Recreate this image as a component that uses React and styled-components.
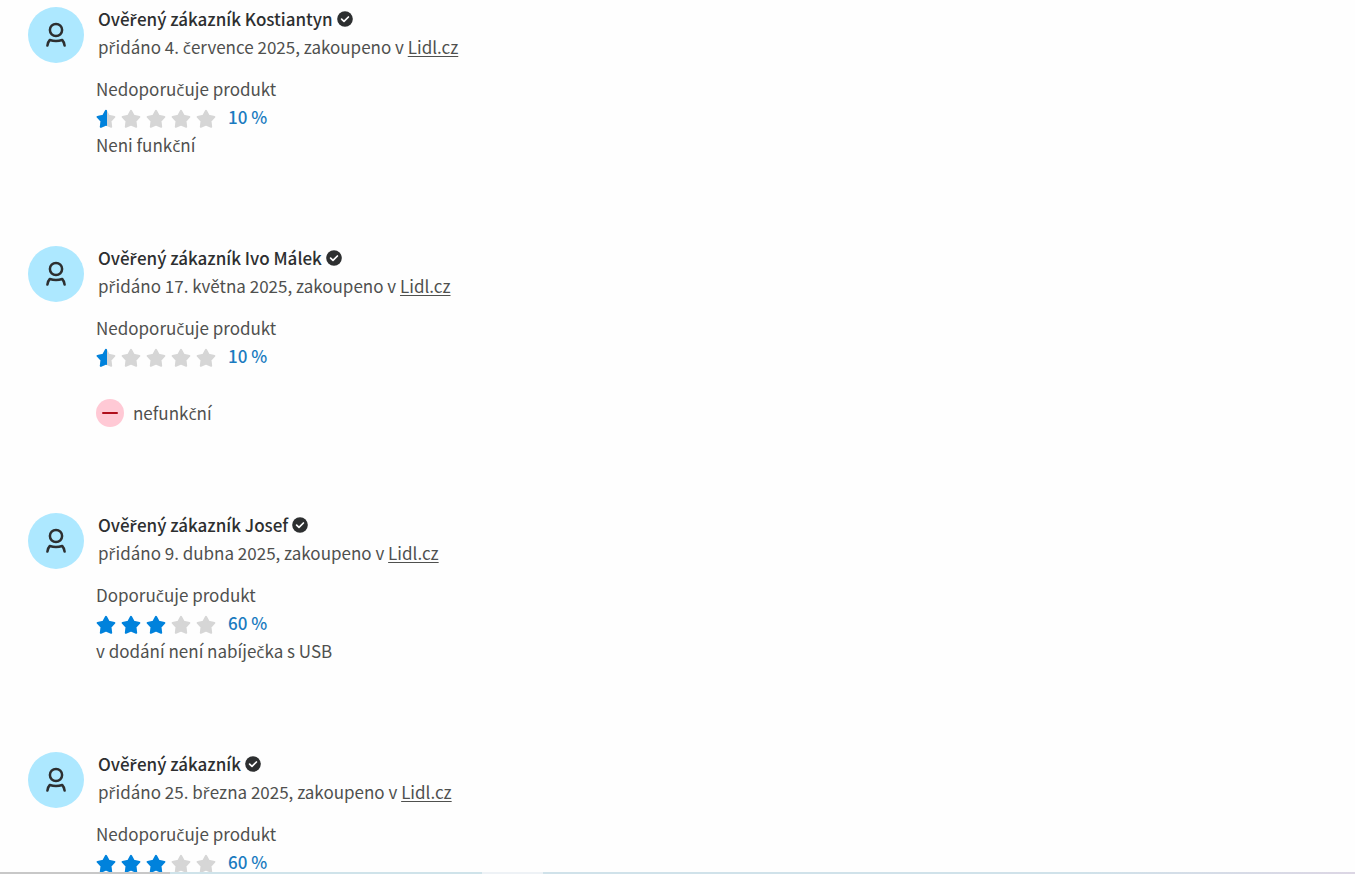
import styled, { createGlobalStyle } from 'styled-components';

const colorText = '#4f504e';
const colorDark = '#2d2f30';
const colorBlue = '#0082dc';
const colorLink = '#1a7bc0';
const colorGrey = '#d6d6d6';

const GlobalStyle = createGlobalStyle`
  * { box-sizing: border-box; }
  body {
    margin: 0;
    background: #fefefe;
    color: ${colorText};
    font-family: "Noto Sans CJK SC", "Open Sans", "Noto Sans", sans-serif;
    font-size: 17px;
    line-height: 28px;
  }
`;

const Page = styled.div`
  height: 100vh;
  display: flex;
  flex-direction: column;
  overflow: hidden;
`;

const Reviews = styled.main`
  flex: 1;
  min-height: 0;
  overflow: hidden;
  padding: 7px 28px 0;
`;

const BottomEdge = styled.footer`
  height: 2px;
  flex-shrink: 0;
  background: linear-gradient(
    to right,
    #c8c8c8 0 170px,
    #cfe3ea 170px 482px,
    #eef2f6 482px 543px,
    #d0e2ea 543px 80%,
    #dcd6e4 100%
  );
`;

const ReviewItem = styled.article`
  margin-bottom: 87px;
`;

const Header = styled.header`
  display: flex;
  gap: 14px;
`;

const Avatar = styled.div`
  width: 56px;
  height: 56px;
  border-radius: 50%;
  background: #ade8ff;
  color: ${colorDark};
  display: flex;
  align-items: center;
  justify-content: center;
`;

const Author = styled.div`
  margin-top: -2px;
`;

// the main family has no č and ř of its own
const Caron = styled.span`
  font-family: "Open Sans", "Noto Sans", sans-serif;
  line-height: 1;
`;

const Name = styled.div`
  display: flex;
  align-items: center;
  gap: 4px;
  color: ${colorDark};
  font-weight: 500;

  ${Caron} { font-weight: 600; }
`;

const ShopLink = styled.a`
  color: inherit;
  text-decoration: underline;
  text-decoration-thickness: 1px;
  text-underline-offset: 2px;
`;

const Body = styled.div`
  padding: 12px 0 0 68px;
`;

const Text = styled.p`
  margin: 0;
`;

const Rating = styled.div`
  display: flex;
  align-items: center;
  height: 28px;
`;

const Stars = styled.div`
  display: flex;
  gap: 5px;
  padding-top: 4px;
  margin-right: 12px;
`;

const Percent = styled.span`
  color: ${colorLink};
  font-weight: 500;
`;

const ConList = styled.ul`
  list-style: none;
  margin: 29px 0 -1px;
  padding: 0;
`;

const Con = styled.li`
  display: flex;
  align-items: center;
  gap: 9px;
`;

const Minus = styled.span`
  width: 28px;
  height: 28px;
  border-radius: 50%;
  background: #ffc9d5;
  display: flex;
  align-items: center;
  justify-content: center;

  &::before {
    content: '';
    width: 16px;
    height: 2px;
    border-radius: 1px;
    background: #b00f1c;
  }
`;

const PersonIcon = () => (
  <svg width="22" height="26" viewBox="0 0 22 26" fill="none" stroke="currentColor" strokeWidth="2.5" strokeLinecap="round" strokeLinejoin="round" aria-hidden="true">
    <circle cx="11" cy="8" r="6.1" />
    <path d="M2.4 23.6 C2.8 21.2 3.5 19.3 4.8 18 C8.8 19.4 13.2 19.4 17.2 18 C18.5 19.3 19.2 21.2 19.6 23.6" />
  </svg>
);

const VerifiedIcon = () => (
  <svg width="16" height="16" viewBox="0 0 16 16" role="img" aria-label="Ověřeno">
    <circle cx="8" cy="8" r="7.8" fill={colorDark} />
    <path d="M4.6 8.1 L7 10.4 L11.4 6" fill="none" stroke="#fff" strokeWidth="1.7" strokeLinecap="round" strokeLinejoin="round" />
  </svg>
);

const starPath = 'M10 1.8 L12.7 6.8 L18.4 7.9 L14.5 12 L15.2 17.8 L10 15.6 L4.8 17.8 L5.5 12 L1.6 7.9 L7.3 6.8 Z';

const Star = ({ fill }) => (
  <svg width="20" height="20" viewBox="0 0 20 20" aria-hidden="true">
    <path d={starPath} fill={fill === 1 ? colorBlue : colorGrey} stroke={fill === 1 ? colorBlue : colorGrey} strokeWidth="2" strokeLinejoin="round" />
    {fill === 0.5 && (
      <svg width="11" height="20" viewBox="0 0 11 20">
        <path d={starPath} fill={colorBlue} stroke={colorBlue} strokeWidth="2" strokeLinejoin="round" />
      </svg>
    )}
  </svg>
);

const Czech = ({ children }) => (
  <span>
    {children.split(/([čř])/).map((part, i) => (i % 2 ? <Caron key={i}>{part}</Caron> : part))}
  </span>
);

const reviews = [
  { name: 'Ověřený zákazník Kostiantyn', date: '4. července 2025', verdict: 'Nedoporučuje produkt', percent: 10, text: 'Neni funkční' },
  { name: 'Ověřený zákazník Ivo Málek', date: '17. května 2025', verdict: 'Nedoporučuje produkt', percent: 10, cons: ['nefunkční'] },
  { name: 'Ověřený zákazník Josef', date: '9. dubna 2025', verdict: 'Doporučuje produkt', percent: 60, text: 'v dodání není nabíječka s USB' },
  { name: 'Ověřený zákazník', date: '25. března 2025', verdict: 'Nedoporučuje produkt', percent: 60 },
];

const Review = ({ name, date, verdict, percent, text, cons }) => (
  <ReviewItem>
    <Header>
      <Avatar><PersonIcon /></Avatar>
      <Author>
        <Name><Czech>{name}</Czech><VerifiedIcon /></Name>
        <Text><Czech>{`přidáno ${date}, zakoupeno v `}</Czech><ShopLink href="#">Lidl.cz</ShopLink></Text>
      </Author>
    </Header>
    <Body>
      <Text><Czech>{verdict}</Czech></Text>
      <Rating>
        <Stars>
          {[0, 1, 2, 3, 4].map(i => (
            <Star key={i} fill={Math.max(0, Math.min(1, percent / 20 - i))} />
          ))}
        </Stars>
        <Percent>{percent} %</Percent>
      </Rating>
      {text && <Text><Czech>{text}</Czech></Text>}
      {cons && (
        <ConList>
          {cons.map(con => <Con key={con}><Minus /><Czech>{con}</Czech></Con>)}
        </ConList>
      )}
    </Body>
  </ReviewItem>
);

const App = () => {
  return (
    <Page>
      <GlobalStyle />
      <Reviews>
        {reviews.map(review => <Review key={review.date} {...review} />)}
      </Reviews>
      <BottomEdge />
    </Page>
  );
};

export default App;
